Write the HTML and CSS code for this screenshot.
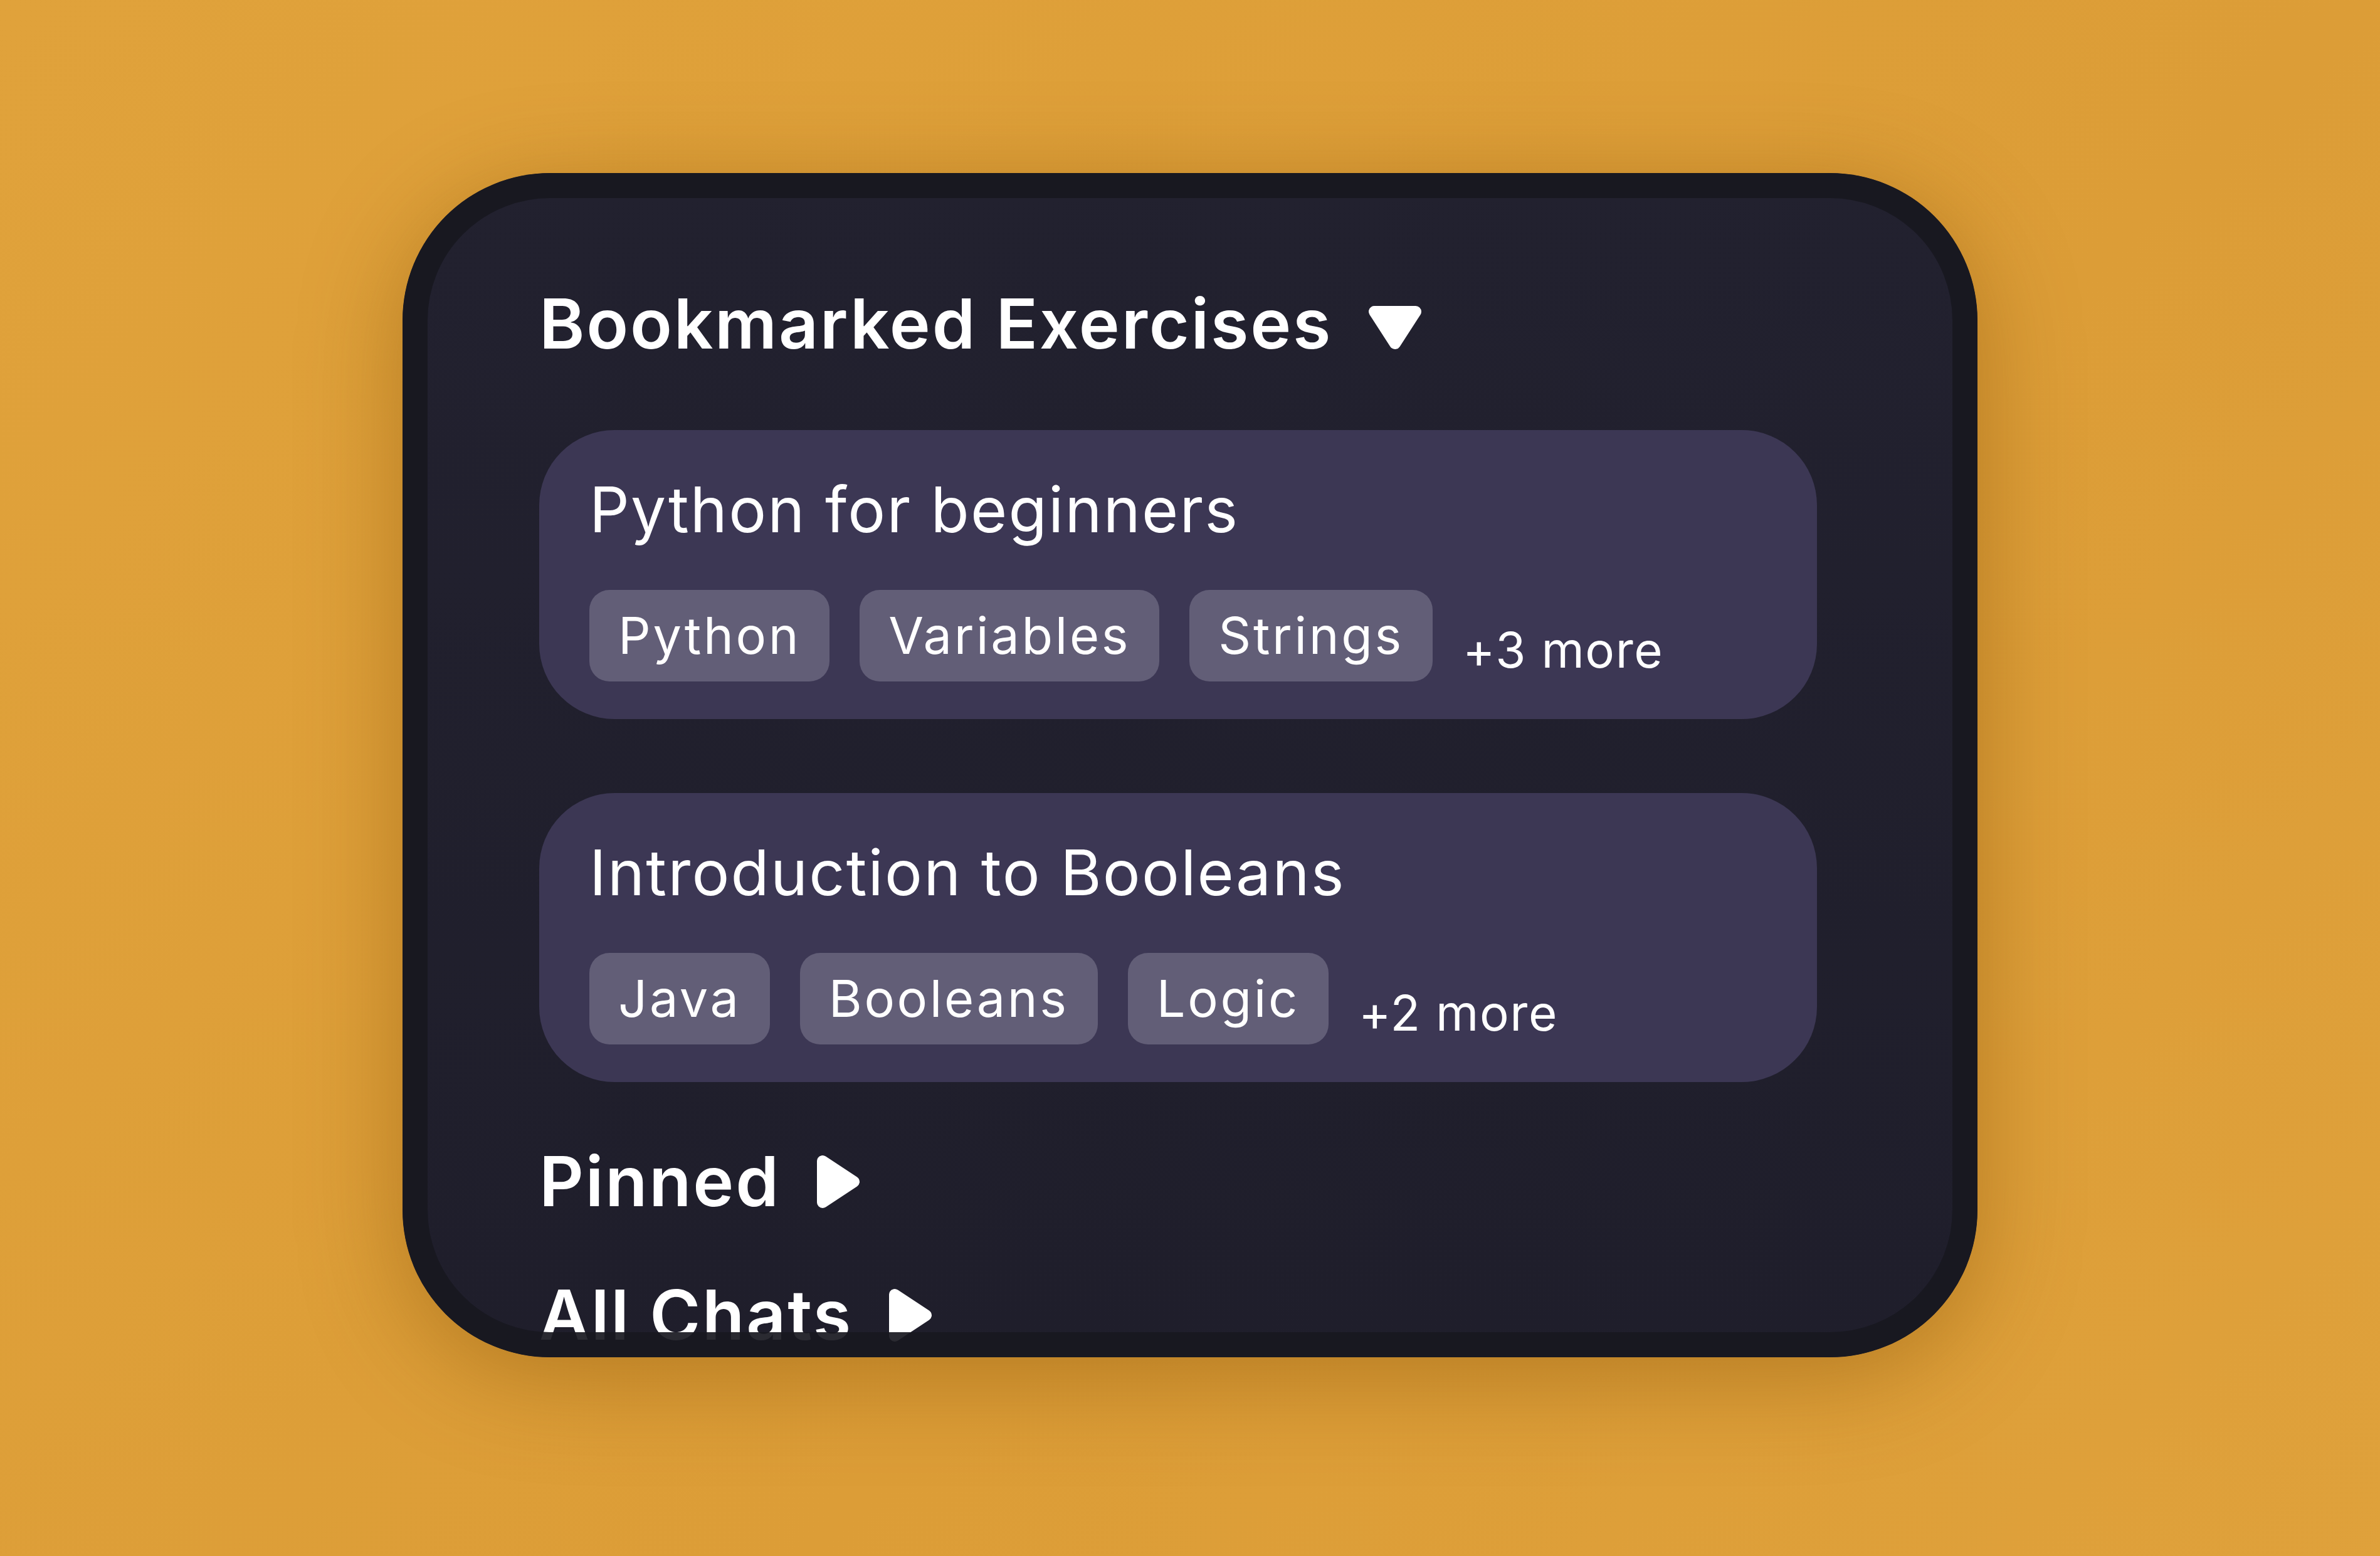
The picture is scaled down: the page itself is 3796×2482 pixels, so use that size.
FILE: index.html
```html
<!DOCTYPE html>
<html>
  <head>
    <meta charset="utf-8" />
    <meta name="viewport" content="width=device-width, initial-scale=1" />
    <title>Bookmarked Exercises</title>
    <link rel="stylesheet" href="styles.css">
  </head>
  <body>
    <div class="device">
      <h2 class="section-title">
        Bookmarked Exercises
        <svg class="caret caret-down" viewBox="0 0 86 71"><polygon points="10,10 76,10 43,61" /></svg>
      </h2>

      <div class="exercise">
        <div class="exercise-name">Python for beginners</div>
        <div class="tags">
          <span class="tag">Python</span>
          <span class="tag">Variables</span>
          <span class="tag">Strings</span>
          <span class="more">+3 more</span>
        </div>
      </div>

      <div class="exercise">
        <div class="exercise-name">Introduction to Booleans</div>
        <div class="tags">
          <span class="tag">Java</span>
          <span class="tag">Booleans</span>
          <span class="tag">Logic</span>
          <span class="more">+2 more</span>
        </div>
      </div>

      <h2 class="section-title">
        Pinned
        <svg class="caret caret-right" viewBox="0 0 70 86"><polygon points="10,10 10,76 60,43" /></svg>
      </h2>

      <h2 class="section-title">
        All Chats
        <svg class="caret caret-right" viewBox="0 0 70 86"><polygon points="10,10 10,76 60,43" /></svg>
      </h2>
    </div>
  </body>
</html>
```

FILE: styles.css
```css
html,
body {
  margin: 0;
  height: 100%;
}

body {
  box-sizing: border-box;
  display: flex;
  justify-content: center;
  align-items: flex-start;
  padding-top: 276px;
  background: linear-gradient(135deg, #e0a23b 0%, #dc9d37 60%, #dfa13b 100%);
  font-family: Inter, "Noto Sans", sans-serif;
  color: #fff;
}

.device {
  position: relative;
  box-sizing: border-box;
  width: 2512px;
  height: 1889px;
  padding: 174px 256px 0 218px;
  border-radius: 235px;
  background: linear-gradient(180deg, #22212f 0%, #1f1e2b 100%);
  overflow: hidden;
  box-shadow: 0 30px 160px rgba(120, 70, 0, 0.4);
}

/* bezel sits over the screen, content shows faintly through */
.device::after {
  content: "";
  position: absolute;
  inset: 0;
  border: 40px solid rgba(24, 24, 31, 0.92);
  border-radius: 235px;
  pointer-events: none;
}

.section-title {
  display: flex;
  align-items: center;
  gap: 57px;
  margin: 0 0 80px;
  font-size: 110px;
  font-weight: 600;
  line-height: 1.21;
  letter-spacing: 0.025em;
}

.section-title:first-child {
  margin-bottom: 103px;
}

.caret {
  fill: #fff;
  stroke: #fff;
  stroke-width: 18;
  stroke-linejoin: round;
}

.caret-down {
  width: 86px;
  height: 71px;
  margin-top: 12px;
}

.caret-right {
  width: 70px;
  height: 86px;
}

.exercise {
  background: #3c3754;
  border-radius: 120px;
  padding: 66px 80px 60px;
  margin-bottom: 118px;
}

.exercise + .section-title {
  margin-top: -26px;
}

.exercise-name {
  font-size: 100px;
  line-height: 1.21;
  letter-spacing: 0.022em;
}

.tags {
  display: flex;
  align-items: flex-end;
  gap: 48px;
  margin-top: 68px;
}

.tag {
  display: flex;
  align-items: center;
  height: 146px;
  padding: 0 46px;
  border-radius: 32px;
  background: #625e77;
  font-size: 81px;
  letter-spacing: 0.045em;
}

.more {
  font-size: 78px;
  line-height: 1.21;
  letter-spacing: 0.02em;
  margin-bottom: 3px;
}
```
